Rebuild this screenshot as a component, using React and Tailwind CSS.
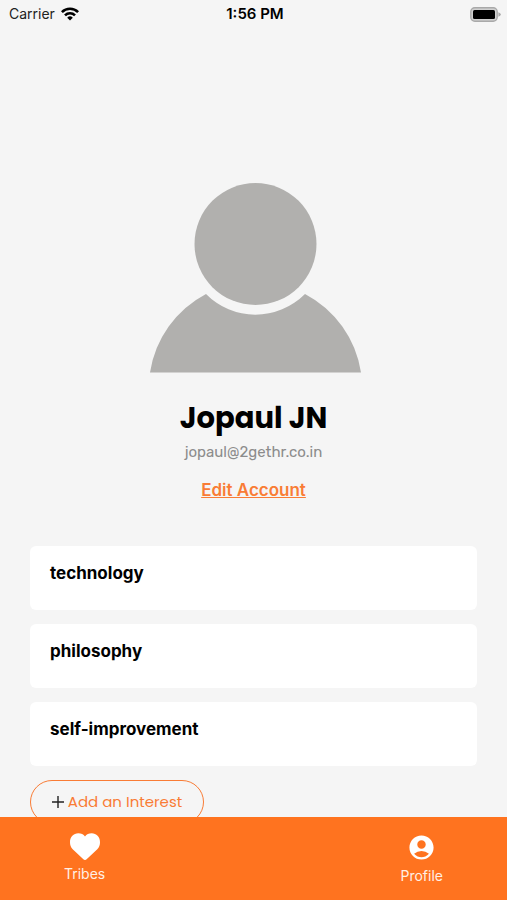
import React from "react";
import { MdAccountCircle } from "react-icons/md";

const WifiIcon = () => (
  <svg viewBox="0 0 18 14" className="w-[18px] h-[14px]" aria-hidden="true">
    <g fill="none" stroke="#000" strokeWidth="2.6">
      <path d="M0.9 5.2A11.4 11.4 0 0 1 17.1 5.2" />
      <path d="M4 8.4A7 7 0 0 1 14 8.4" />
    </g>
    <path d="M9 13.6L6.2 10.7A4 4 0 0 1 11.8 10.7Z" />
  </svg>
);

const BatteryIcon = () => (
  <svg viewBox="0 0 31 15" className="w-[31px] h-[15px]" aria-hidden="true">
    <rect x="0.8" y="0.8" width="26.4" height="13.4" rx="4" fill="#d0d0d0" stroke="#a9a9a9" strokeWidth="1.4" />
    <rect x="3" y="3" width="22" height="9" rx="1.5" fill="#000" />
    <path d="M28.4 5.2Q30.8 6 30.8 7.5T28.4 9.8Z" fill="#a9a9a9" />
  </svg>
);

const Avatar = () => (
  <svg viewBox="-3 0 214 190" className="w-[214px] h-[190px]" fill="#b1b0ae" role="img" aria-label="Avatar">
    <circle cx="105.5" cy="61" r="61" />
    <path d="M0 189.5A107 107 0 0 1 56 111A70 70 0 0 0 155 111A107 107 0 0 1 211 189.5Z" />
  </svg>
);

const HeartIcon = () => (
  <svg viewBox="0 0 30 27" className="w-[30px] h-[27px]" fill="#fff" aria-hidden="true">
    <path d="M15 27C14.3 27 13.7 26.6 13.1 26L2.7 16.2C0.8 14.3 0 11.8 0 9.2C0 3.9 3.6 0.3 8.3 0.3C11.2 0.3 13.5 1.4 15 3.6C16.5 1.4 18.8 0.3 21.7 0.3C26.4 0.3 30 3.9 30 9.2C30 11.8 29.2 14.3 27.3 16.2L16.9 26C16.3 26.6 15.7 27 15 27Z" />
  </svg>
);

const interests = ["technology", "philosophy", "self-improvement"];

const App = () => {
  return (
    <div className="h-screen flex flex-col bg-[#f5f5f5] text-black font-['Inter',sans-serif]">
      {/* Status Bar */}
      <header className="shrink-0 h-7 pl-[9px] pr-1.5 grid grid-cols-3 items-center text-sm">
        <div className="flex items-center gap-1.5 text-[#222]">
          <span>Carrier</span>
          <WifiIcon />
        </div>
        <span className="text-center text-[15px] font-semibold">1:56 PM</span>
        <div className="flex justify-end">
          <BatteryIcon />
        </div>
      </header>

      <main className="flex-1 min-h-0 overflow-hidden px-[30px]">
        {/* Account */}
        <section className="pt-[155px] flex flex-col items-center">
          <Avatar />
          <h1 className="mt-[25px] text-[29px] leading-10 font-bold font-['Poppins','Inter',sans-serif]">
            Jopaul JN
          </h1>
          <p className="mt-1 text-[15px] leading-5 text-[#8c8c8c] font-['Rubik','Roboto',sans-serif]">
            jopaul@2gethr.co.in
          </p>
          <a href="#edit" className="mt-4 text-[17px] leading-6 font-semibold text-[#f97c35] underline">
            Edit Account
          </a>
        </section>

        {/* Interests */}
        <ul className="mt-11 flex flex-col gap-[14px]">
          {interests.map((interest) => (
            <li key={interest} className="h-16 px-5 pt-[15px] rounded-md bg-white">
              <h2 className="text-[17px] leading-6 font-bold">{interest}</h2>
            </li>
          ))}
        </ul>

        <button
          type="button"
          className="mt-[14px] h-11 w-[174px] flex items-center justify-center gap-1 rounded-full border border-[#f97c35] text-[15px] text-[#f97c35] font-['Poppins','Inter',sans-serif]"
        >
          <svg viewBox="0 0 12 12" className="w-3 h-3" stroke="#222" strokeWidth="1.4" aria-hidden="true">
            <path d="M6 0V12M0 6H12" />
          </svg>
          Add an Interest
        </button>
      </main>

      {/* Tab Bar */}
      <nav className="shrink-0 h-[83px] px-16 pt-4 flex justify-between items-start bg-[#ff731f] text-sm leading-5 text-[#fff0e6]">
        <button type="button" className="flex flex-col items-center gap-1">
          <HeartIcon />
          Tribes
        </button>
        <button type="button" className="flex flex-col items-center gap-1">
          <MdAccountCircle className="w-[29px] h-[29px] text-white" />
          Profile
        </button>
      </nav>
    </div>
  );
};

export default App;
